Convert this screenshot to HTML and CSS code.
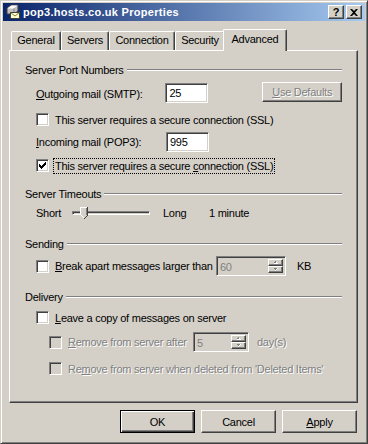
FILE: index.html
```html
<!DOCTYPE html>
<html lang="en">
<head>
    <meta charset="UTF-8">
    <meta name="viewport" content="width=device-width, initial-scale=1.0">
    <title>pop3.hosts.co.uk Properties</title>
    <link rel="stylesheet" href="styles.css">
</head>
<body>
    <div class="window">
        <div class="titlebar">
            <svg class="title-icon" width="16" height="16" viewBox="0 0 16 16">
                <path d="M2 4 L6 1 L13 1 L13 7 L9 10 L2 10 Z" fill="#c0c0c0" stroke="#404040" stroke-width="1"/>
                <path d="M2.5 4.5 L6.5 1.5 L12.5 1.5 L8.5 4.5 Z" fill="#ffffff"/>
                <path d="M9 4.5 L9 9.5" stroke="#808080" stroke-width="1"/>
                <rect x="5.5" y="8.5" width="9" height="6" fill="#ffffc8" stroke="#404040" stroke-width="1"/>
                <path d="M5.5 8.5 L10 12 L14.5 8.5" fill="none" stroke="#808040" stroke-width="1"/>
            </svg>
            <span class="title-text">pop3.hosts.co.uk Properties</span>
            <div class="title-buttons">
                <button class="caption-btn help-btn">?</button>
                <button class="caption-btn close-btn">
                    <svg width="8" height="7" viewBox="0 0 8 7">
                        <path d="M0 0 H2 L4 2 L6 0 H8 L5 3.5 L8 7 H6 L4 5 L2 7 H0 L3 3.5 Z" fill="#000"/>
                    </svg>
                </button>
            </div>
        </div>

        <div class="dialog-body">
            <div class="tabs">
                <div class="tab tab-general">General</div>
                <div class="tab tab-servers">Servers</div>
                <div class="tab tab-connection">Connection</div>
                <div class="tab tab-security">Security</div>
                <div class="tab tab-advanced active">Advanced</div>
            </div>

            <div class="panel">
                <div class="group-title heading-ports"><span>Server Port Numbers</span><i class="etch"></i></div>

                <div class="row smtp-row">
                    <span class="port-label smtp-label"><u>O</u>utgoing mail (SMTP):</span>
                    <div class="field port-field smtp-field">25</div>
                    <div class="btn small-btn disabled defaults-btn"><span class="dim"><u>U</u>se Defaults</span></div>
                </div>

                <div class="row check-row ssl-out">
                    <span class="check"></span>
                    <span class="check-label">This server requires a secure connection (SSL)</span>
                </div>

                <div class="row pop-row">
                    <span class="port-label"><u>I</u>ncoming mail (POP3):</span>
                    <div class="field port-field">995</div>
                </div>

                <div class="row check-row ssl-in">
                    <span class="check">
                        <svg width="7" height="7" viewBox="0 0 7 7" shape-rendering="crispEdges">
                            <path d="M6 0 H7 V3 H6 V4 H5 V5 H4 V6 H3 V7 H2 V6 H1 V5 H0 V2 H1 V3 H2 V4 H3 V3 H4 V2 H5 V1 H6 Z" fill="#000"/>
                        </svg>
                    </span>
                    <span class="check-label focused">This server requires a secure <u>c</u>onnection (SSL)</span>
                </div>

                <div class="group-title heading-timeouts"><span>Server Timeouts</span><i class="etch"></i></div>

                <div class="row slider-row">
                    <span class="slider-min">Short</span>
                    <div class="slider">
                        <div class="slider-track"></div>
                        <svg class="slider-thumb" width="8" height="12" viewBox="0 0 8 12" shape-rendering="crispEdges">
                            <path d="M0 0 H8 V8 L4 12 L0 8 Z" fill="#d4d0c8"/>
                            <path d="M0 0 H7 V1 H1 V8 H0 Z" fill="#ffffff"/>
                            <path d="M1 8 H2 V9 H3 V10 H4 V11 H3 V10 H2 V9 H1 Z" fill="#ffffff"/>
                            <path d="M7 0 H8 V8 H7 Z" fill="#404040"/>
                            <path d="M6 1 H7 V8 H6 Z" fill="#808080"/>
                            <path d="M7 8 H8 V9 H7 V10 H6 V11 H5 V12 H4 V11 H5 V10 H6 V9 H7 Z" fill="#404040"/>
                        </svg>
                    </div>
                    <span class="slider-max">Long</span>
                    <span class="slider-value">1 minute</span>
                </div>

                <div class="group-title heading-sending"><span>Sending</span><i class="etch"></i></div>

                <div class="row check-row break-row">
                    <span class="check"></span>
                    <span class="check-label break-label"><u>B</u>reak apart messages larger than</span>
                    <div class="spin spin-size">
                        <span class="spin-value">60</span>
                        <span class="spin-btns">
                            <span class="spin-btn">
                                <svg width="5" height="4" viewBox="0 0 5 4" shape-rendering="crispEdges"><path d="M2 0 H3 V1 H2 Z M1 1 H4 V2 H1 Z" fill="#808080"/><path d="M3 1 H4 V2 H3 Z M4 2 H5 V3 H4 Z M1 2 H4 V3 H1 Z" fill="#fff"/></svg>
                            </span>
                            <span class="spin-btn">
                                <svg width="5" height="4" viewBox="0 0 5 4" shape-rendering="crispEdges"><path d="M1 0 H4 V1 H1 Z M2 1 H3 V2 H2 Z" fill="#808080"/><path d="M4 0 H5 V1 H4 Z M3 1 H4 V2 H3 Z M2 2 H3 V3 H2 Z" fill="#fff"/></svg>
                            </span>
                        </span>
                    </div>
                    <span class="unit-kb">KB</span>
                </div>

                <div class="group-title heading-delivery"><span>Delivery</span><i class="etch"></i></div>

                <div class="row check-row leave-row">
                    <span class="check"></span>
                    <span class="check-label"><u>L</u>eave a copy of messages on server</span>
                </div>

                <div class="row check-row sub-row remove-after">
                    <span class="check disabled"></span>
                    <span class="check-label dim remove-label"><u>R</u>emove from server after</span>
                    <div class="spin spin-days">
                        <span class="spin-value">5</span>
                        <span class="spin-btns">
                            <span class="spin-btn">
                                <svg width="5" height="4" viewBox="0 0 5 4" shape-rendering="crispEdges"><path d="M2 0 H3 V1 H2 Z M1 1 H4 V2 H1 Z" fill="#808080"/><path d="M3 1 H4 V2 H3 Z M4 2 H5 V3 H4 Z M1 2 H4 V3 H1 Z" fill="#fff"/></svg>
                            </span>
                            <span class="spin-btn">
                                <svg width="5" height="4" viewBox="0 0 5 4" shape-rendering="crispEdges"><path d="M1 0 H4 V1 H1 Z M2 1 H3 V2 H2 Z" fill="#808080"/><path d="M4 0 H5 V1 H4 Z M3 1 H4 V2 H3 Z M2 2 H3 V3 H2 Z" fill="#fff"/></svg>
                            </span>
                        </span>
                    </div>
                    <span class="dim unit-days">day(s)</span>
                </div>

                <div class="row check-row sub-row remove-deleted">
                    <span class="check disabled"></span>
                    <span class="check-label dim">Re<u>m</u>ove from server when deleted from 'Deleted Items'</span>
                </div>
            </div>

            <div class="actions">
                <button class="btn default">OK</button>
                <button class="btn">Cancel</button>
                <button class="btn"><span><u>A</u>pply</span></button>
            </div>
        </div>
    </div>
</body>
</html>
```

FILE: styles.css
```css
body {
    margin: 0;
    background: #d4d0c8;
    font-family: "Liberation Sans", Arial, sans-serif;
    font-size: 11px;
    letter-spacing: -0.25px;
    color: #000;
}
u {
    text-decoration: underline;
    text-underline-offset: 1px;
}
.window {
    width: 368px;
    height: 444px;
    box-sizing: border-box;
    border: 1px solid;
    border-color: #d4d0c8 #404040 #404040 #d4d0c8;
    box-shadow: inset 1px 1px #fff, inset -1px -1px #808080;
    padding: 2px;
    display: flex;
    flex-direction: column;
}

/* title bar */
.titlebar {
    height: 18px;
    flex: none;
    display: flex;
    align-items: center;
    background: linear-gradient(to right, #0a246a, #a6caf0);
    color: #fff;
}
.title-icon {
    margin-left: 2px;
    flex: none;
}
.title-text {
    margin-left: 2px;
    font-weight: bold;
    letter-spacing: 0.3px;
    white-space: nowrap;
}
.title-buttons {
    margin-left: auto;
    display: flex;
    gap: 2px;
    padding-right: 3px;
}
.caption-btn {
    width: 16px;
    height: 14px;
    box-sizing: border-box;
    padding: 0;
    border: 1px solid;
    border-color: #fff #404040 #404040 #fff;
    box-shadow: inset -1px -1px #808080, inset 1px 1px #d4d0c8;
    background: #d4d0c8;
    display: flex;
    align-items: center;
    justify-content: center;
    font-family: "Liberation Sans", Arial, sans-serif;
    font-size: 11px;
    font-weight: bold;
    line-height: 12px;
    color: #000;
}

/* tabs */
.dialog-body {
    flex: 1;
    display: flex;
    flex-direction: column;
    padding: 8px 7px 0 6px;
}
.tabs {
    height: 21px;
    flex: none;
    display: flex;
    align-items: flex-end;
    padding-left: 2px;
}
.tab {
    height: 19px;
    box-sizing: border-box;
    border-top: 1px solid #fff;
    border-left: 1px solid #fff;
    border-right: 1px solid #404040;
    border-radius: 2px 2px 0 0;
    box-shadow: inset -1px 0 #808080;
    text-align: center;
    line-height: 17px;
    white-space: nowrap;
}
.tab-general { width: 50px; }
.tab-servers { width: 48px; }
.tab-connection { width: 66px; }
.tab-security { width: 50px; }
.tab-advanced { width: 60px; }
.tab.active {
    position: relative;
    z-index: 1;
    width: 64px;
    height: 22px;
    margin: 0 -2px -1px -2px;
    padding-top: 1px;
    background: #d4d0c8;
}

/* panel */
.panel {
    height: 353px;
    flex: none;
    box-sizing: border-box;
    border: 1px solid;
    border-color: #fff #404040 #404040 #fff;
    box-shadow: inset -1px -1px #808080;
    padding: 12px 15px 0 15px;
    display: flex;
    flex-direction: column;
}
.group-title {
    height: 13px;
    display: flex;
    align-items: center;
    white-space: nowrap;
}
.etch {
    flex: 1;
    height: 0;
    border-top: 1px solid #808080;
    border-bottom: 1px solid #fff;
    margin-left: 3px;
}
.heading-timeouts { margin-top: 15px; }
.heading-sending { margin-top: 17px; }
.heading-delivery { margin-top: 14px; }

.row {
    display: flex;
    align-items: center;
    padding-left: 11px;
    white-space: nowrap;
}
.sub-row { padding-left: 24px; }

.smtp-row {
    margin-top: 6px;
    height: 21px;
    align-items: flex-start;
}
.smtp-row .smtp-label { margin-top: 6px; }
.smtp-row .smtp-field { margin-top: 1px; }
.ssl-out { margin-top: 10px; height: 13px; }
.pop-row { margin-top: 6px; height: 20px; }
.ssl-in { margin-top: 7px; height: 13px; }
.slider-row { margin-top: 6px; height: 14px; }
.break-row { margin-top: 6px; height: 20px; }
.leave-row { margin-top: 8px; height: 13px; }
.remove-after { margin-top: 8px; height: 20px; }
.remove-deleted { margin-top: 10px; height: 13px; }

.port-label { width: 130px; }

/* sunken controls */
.field,
.check,
.spin {
    box-sizing: border-box;
    border: 1px solid;
    border-color: #808080 #fff #fff #808080;
    box-shadow: inset 1px 1px #404040, inset -1px -1px #d4d0c8;
    background: #fff;
}
.port-field {
    width: 43px;
    height: 20px;
    padding: 2px 3px;
    line-height: 14px;
}
.check {
    width: 13px;
    height: 13px;
    flex: none;
    display: flex;
    align-items: center;
    justify-content: center;
}
.check.disabled { background: #d4d0c8; }
.check-label { margin-left: 6px; }
.check-label.focused {
    margin-left: 5px;
    padding: 0 1px;
    line-height: 14px;
    outline: 1px dotted #000;
    outline-offset: 0;
}
.dim {
    color: #808080;
    text-shadow: 1px 1px 0 #fff;
}

/* buttons */
.btn {
    width: 75px;
    height: 23px;
    box-sizing: border-box;
    padding: 0;
    border: 1px solid;
    border-color: #fff #404040 #404040 #fff;
    box-shadow: inset -1px -1px #808080, inset 1px 1px #d4d0c8;
    background: #d4d0c8;
    display: flex;
    align-items: center;
    justify-content: center;
    font-family: inherit;
    font-size: 11px;
    letter-spacing: -0.25px;
    color: #000;
}
.btn.default {
    border-color: #000;
    box-shadow: inset 1px 1px #fff, inset -1px -1px #404040, inset -2px -2px #808080;
}
.small-btn {
    width: 80px;
    height: 20px;
}
.defaults-btn { margin-left: 54px; }

/* slider */
.slider-min { width: 36px; }
.slider {
    position: relative;
    width: 78px;
    height: 14px;
    display: flex;
    align-items: center;
}
.slider-track {
    width: 100%;
    height: 4px;
    box-sizing: border-box;
    border: 1px solid;
    border-color: #808080 #fff #fff #808080;
    box-shadow: inset 1px 1px #404040;
}
.slider-thumb {
    position: absolute;
    left: 8px;
    top: 1px;
}
.slider-max {
    margin-left: 13px;
    width: 46px;
}

/* spin boxes */
.break-label { width: 161px; }
.remove-label { width: 125px; }
.spin {
    height: 20px;
    flex: none;
    display: flex;
    padding: 2px;
    background: #d4d0c8;
}
.spin-size { width: 70px; }
.spin-days { width: 56px; }
.spin-value {
    flex: 1;
    padding-left: 1px;
    line-height: 16px;
    color: #808080;
}
.spin-btns {
    width: 15px;
    display: flex;
    flex-direction: column;
}
.spin-btn {
    flex: 1;
    box-sizing: border-box;
    border: 1px solid;
    border-color: #fff #404040 #404040 #fff;
    box-shadow: inset -1px -1px #808080;
    display: flex;
    align-items: center;
    justify-content: center;
}
.unit-kb { margin-left: 11px; }
.unit-days { margin-left: 8px; }

/* dialog buttons */
.actions {
    margin-top: 7px;
    display: flex;
    justify-content: flex-end;
    gap: 6px;
    padding-right: 1px;
}
```
